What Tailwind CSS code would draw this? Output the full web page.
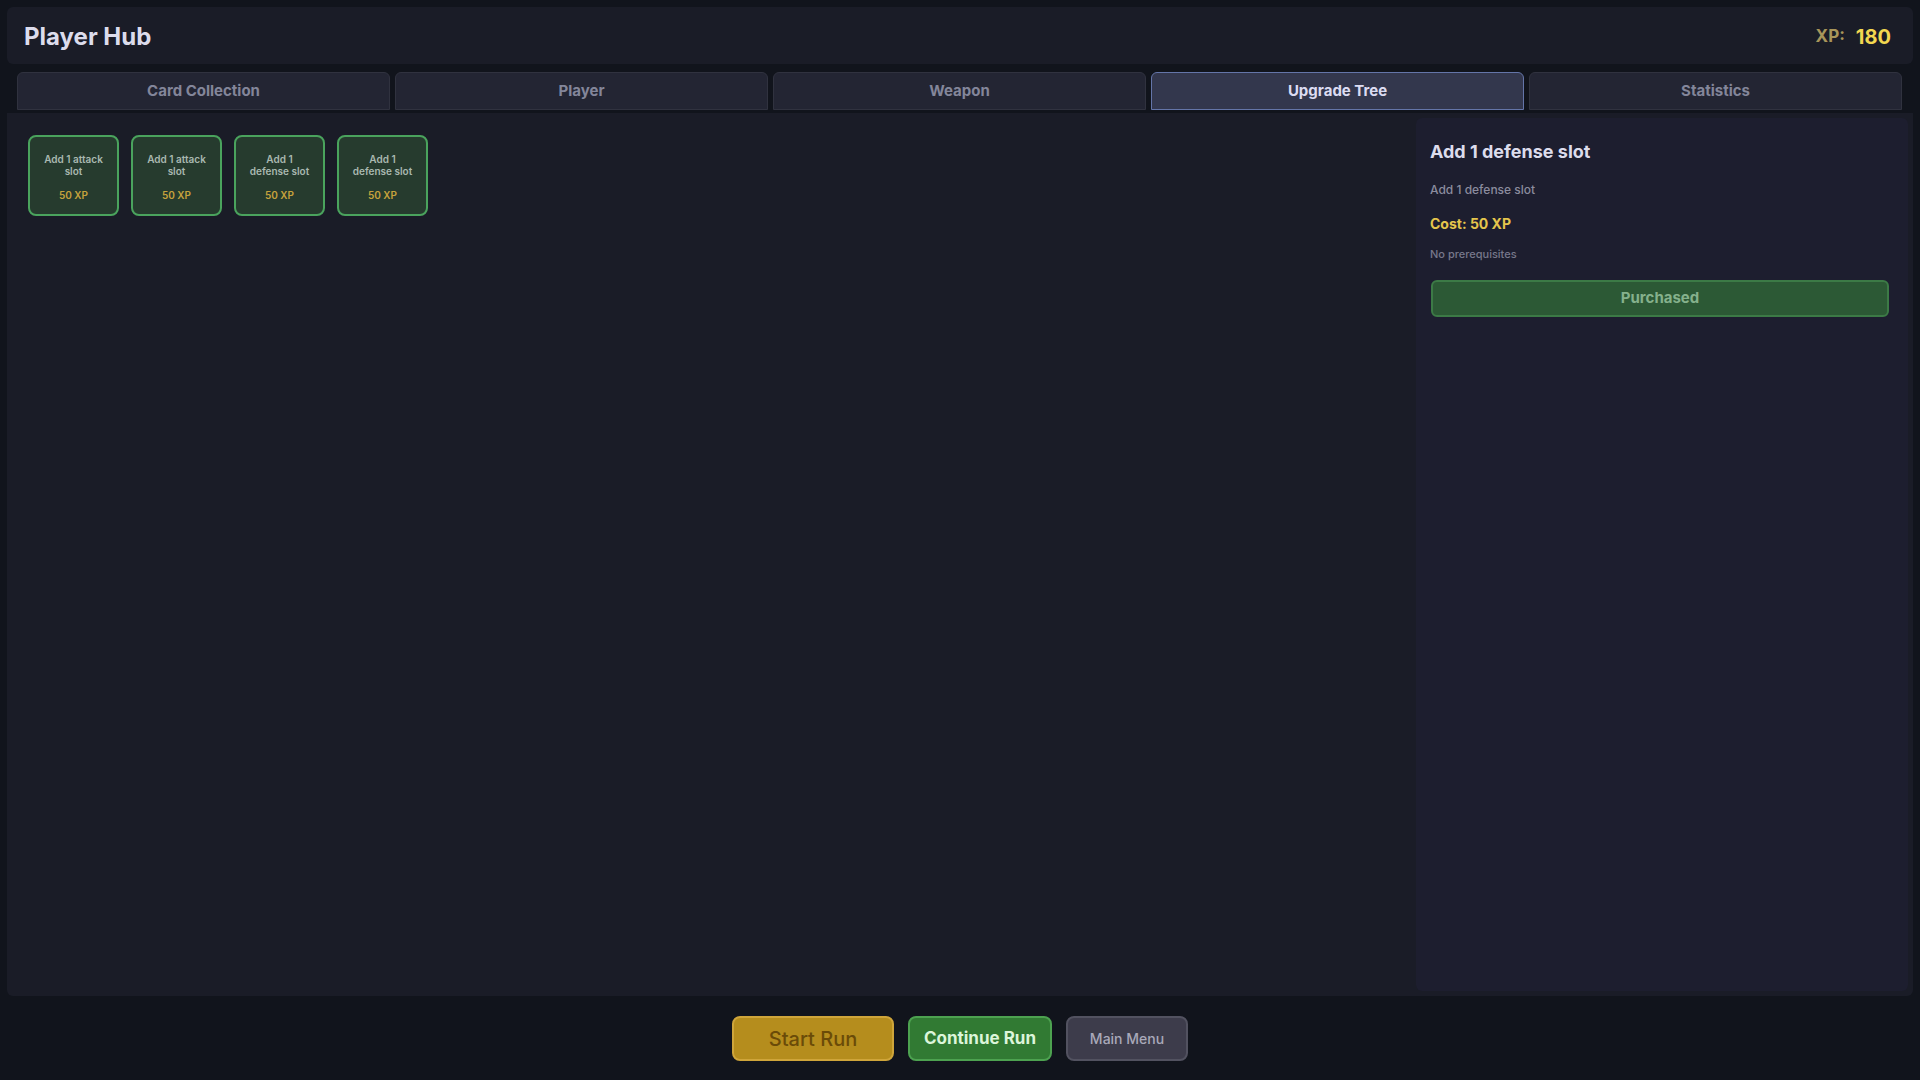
<!DOCTYPE html>
<html lang="en">
<head>
    <meta charset="UTF-8">
    <meta name="viewport" content="width=device-width, initial-scale=1.0">
    <title>Player Hub</title>
    <script src="https://cdn.jsdelivr.net/npm/@tailwindcss/browser@4"></script>
</head>
<body class="bg-[#11141c] min-h-screen flex flex-col px-[7px] pt-[7px] font-[Inter,sans-serif] text-[#dcdcec]">
    <!-- Header -->
    <header class="flex items-center justify-between h-[57px] pt-[3px] pl-[17px] pr-[22px] rounded-md bg-[#1a1c27]">
        <h1 class="text-2xl font-bold">Player Hub</h1>
        <p class="flex items-center gap-[11px] font-bold">
            <span class="text-[17px] text-[#a8955a]">XP:</span>
            <span class="text-xl text-[#f2d750]">180</span>
        </p>
    </header>

    <!-- Tabs -->
    <nav class="grid grid-cols-5 gap-[5px] mt-2 pl-[10px] pr-[11px] text-[15px] font-bold text-[#83869a]">
        <button class="h-[38px] rounded-t-md border border-[#30323f] bg-[#232533]">Card Collection</button>
        <button class="h-[38px] rounded-t-md border border-[#30323f] bg-[#232533]">Player</button>
        <button class="h-[38px] rounded-t-md border border-[#30323f] bg-[#232533]">Weapon</button>
        <button class="h-[38px] rounded-t-md border border-[#6475a8] bg-[#33374d] text-[#dcdcf2]">Upgrade Tree</button>
        <button class="h-[38px] rounded-t-md border border-[#30323f] bg-[#232533]">Statistics</button>
    </nav>

    <main class="flex flex-1 mt-[3px] p-[5px] rounded-b-md bg-[#1a1c27]">
        <!-- Upgrade nodes -->
        <section class="flex flex-1 items-start gap-3 pl-4 pt-[17px] text-[10px] leading-3 font-semibold text-[#a9b8b0]">
            <button class="flex flex-col items-center justify-center gap-3 w-[91px] h-[81px] pt-[2px] px-[10px] rounded-lg border-2 border-[#4aa35d] bg-[#263b2e]">
                <span>Add 1 attack slot</span>
                <span class="text-[#c5a23c]">50 XP</span>
            </button>
            <button class="flex flex-col items-center justify-center gap-3 w-[91px] h-[81px] pt-[2px] px-[10px] rounded-lg border-2 border-[#4aa35d] bg-[#263b2e]">
                <span>Add 1 attack slot</span>
                <span class="text-[#c5a23c]">50 XP</span>
            </button>
            <button class="flex flex-col items-center justify-center gap-3 w-[91px] h-[81px] pt-[2px] px-[10px] rounded-lg border-2 border-[#4aa35d] bg-[#263b2e]">
                <span>Add 1 defense slot</span>
                <span class="text-[#c5a23c]">50 XP</span>
            </button>
            <button class="flex flex-col items-center justify-center gap-3 w-[91px] h-[81px] pt-[2px] px-[10px] rounded-lg border-2 border-[#4aa35d] bg-[#263b2e]">
                <span>Add 1 defense slot</span>
                <span class="text-[#c5a23c]">50 XP</span>
            </button>
        </section>

        <!-- Selected upgrade -->
        <aside class="flex flex-col w-[492px] pl-[14px] pr-[18px] pt-5 rounded-md bg-[#1d1e2f]">
            <h2 class="text-lg leading-7 font-bold">Add 1 defense slot</h2>
            <p class="mt-[14px] text-xs leading-5 font-medium text-[#8b8c9e]">Add 1 defense slot</p>
            <p class="mt-3 text-sm leading-6 font-bold text-[#e5c54c]">Cost: 50 XP</p>
            <p class="mt-2 text-[11px] leading-5 font-medium text-[#77788b]">No prerequisites</p>
            <button class="h-[37px] mt-4 mx-px rounded-md border-2 border-[#3c7a46] bg-[#2c5935] text-[15px] font-bold text-[#85b18c]" disabled>Purchased</button>
        </aside>
    </main>

    <!-- Run controls -->
    <footer class="flex items-center justify-center gap-[14px] h-[84px]">
        <button class="h-[45px] w-[162px] pt-[2px] rounded-lg border-2 border-[#cfa53a] bg-[#b58d1d] text-xl font-medium text-[#6a4b08]">Start Run</button>
        <button class="h-[45px] w-[144px] pt-[2px] rounded-lg border-2 border-[#4da250] bg-[#317a33] text-[17px] font-bold text-[#dcf5da]">Continue Run</button>
        <button class="h-[45px] w-[122px] pt-[2px] rounded-lg border-2 border-[#525260] bg-[#3d3c4b] text-sm font-medium text-[#a9a9b9]">Main Menu</button>
    </footer>
</body>
</html>
